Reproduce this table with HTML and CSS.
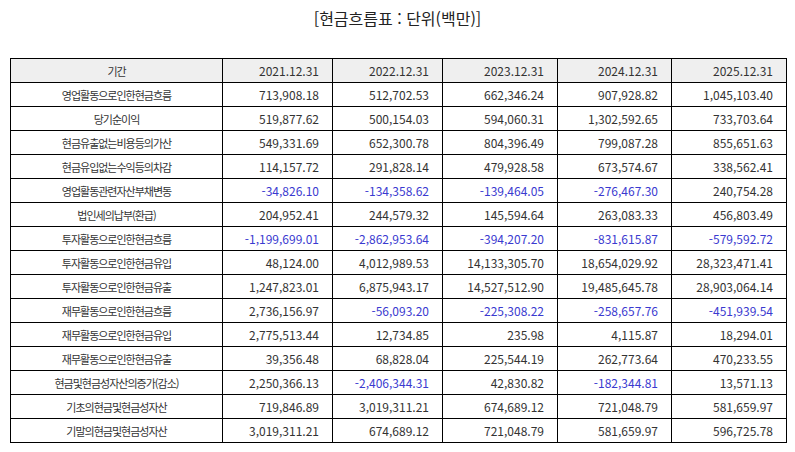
FILE: index.html
```html
<!DOCTYPE html>
<html lang="ko">
<head>
<meta charset="utf-8">
<title>현금흐름표</title>
<link rel="stylesheet" href="styles.css">
</head>
<body>
<h1 class="title">[현금흐름표 : 단위(백만)]</h1>
<table class="cf">
<colgroup>
<col class="c-label"><col class="c-y1"><col class="c-y2"><col class="c-y3"><col class="c-y4"><col class="c-y5">
</colgroup>
<thead>
<tr><th class="lbl">기간</th><th>2021.12.31</th><th>2022.12.31</th><th>2023.12.31</th><th>2024.12.31</th><th>2025.12.31</th></tr>
</thead>
<tbody>
<tr><td class="lbl">영업활동으로인한현금흐름</td><td>713,908.18</td><td>512,702.53</td><td>662,346.24</td><td>907,928.82</td><td>1,045,103.40</td></tr>
<tr><td class="lbl">당기순이익</td><td>519,877.62</td><td>500,154.03</td><td>594,060.31</td><td>1,302,592.65</td><td>733,703.64</td></tr>
<tr><td class="lbl">현금유출없는비용등의가산</td><td>549,331.69</td><td>652,300.78</td><td>804,396.49</td><td>799,087.28</td><td>855,651.63</td></tr>
<tr><td class="lbl">현금유입없는수익등의차감</td><td>114,157.72</td><td>291,828.14</td><td>479,928.58</td><td>673,574.67</td><td>338,562.41</td></tr>
<tr><td class="lbl">영업활동관련자산부채변동</td><td class="neg">-34,826.10</td><td class="neg">-134,358.62</td><td class="neg">-139,464.05</td><td class="neg">-276,467.30</td><td>240,754.28</td></tr>
<tr><td class="lbl">법인세의납부(환급)</td><td>204,952.41</td><td>244,579.32</td><td>145,594.64</td><td>263,083.33</td><td>456,803.49</td></tr>
<tr><td class="lbl">투자활동으로인한현금흐름</td><td class="neg">-1,199,699.01</td><td class="neg">-2,862,953.64</td><td class="neg">-394,207.20</td><td class="neg">-831,615.87</td><td class="neg">-579,592.72</td></tr>
<tr><td class="lbl">투자활동으로인한현금유입</td><td>48,124.00</td><td>4,012,989.53</td><td>14,133,305.70</td><td>18,654,029.92</td><td>28,323,471.41</td></tr>
<tr><td class="lbl">투자활동으로인한현금유출</td><td>1,247,823.01</td><td>6,875,943.17</td><td>14,527,512.90</td><td>19,485,645.78</td><td>28,903,064.14</td></tr>
<tr><td class="lbl">재무활동으로인한현금흐름</td><td>2,736,156.97</td><td class="neg">-56,093.20</td><td class="neg">-225,308.22</td><td class="neg">-258,657.76</td><td class="neg">-451,939.54</td></tr>
<tr><td class="lbl">재무활동으로인한현금유입</td><td>2,775,513.44</td><td>12,734.85</td><td>235.98</td><td>4,115.87</td><td>18,294.01</td></tr>
<tr><td class="lbl">재무활동으로인한현금유출</td><td>39,356.48</td><td>68,828.04</td><td>225,544.19</td><td>262,773.64</td><td>470,233.55</td></tr>
<tr><td class="lbl">현금및현금성자산의증가(감소)</td><td>2,250,366.13</td><td class="neg">-2,406,344.31</td><td>42,830.82</td><td class="neg">-182,344.81</td><td>13,571.13</td></tr>
<tr><td class="lbl">기초의현금및현금성자산</td><td>719,846.89</td><td>3,019,311.21</td><td>674,689.12</td><td>721,048.79</td><td>581,659.97</td></tr>
<tr><td class="lbl">기말의현금및현금성자산</td><td>3,019,311.21</td><td>674,689.12</td><td>721,048.79</td><td>581,659.97</td><td>596,725.78</td></tr>
</tbody>
</table>
</body>
</html>
```
FILE: styles.css
```css
html, body {
  margin: 0;
  padding: 0;
  background: #ffffff;
}
body {
  font-family: "Noto Sans CJK KR", "Noto Sans", sans-serif;
  color: #333333;
}
.title {
  margin: 0;
  padding-top: 6px;
  height: 58px;
  box-sizing: border-box;
  text-align: center;
  font-size: 16px;
  font-weight: 400;
  line-height: 24px;
  color: #222222;
}
.cf {
  margin-left: 10px;
  width: 776px;
  border-collapse: collapse;
  table-layout: fixed;
  font-size: 12px;
}
.c-label { width: 212px; }
.c-y1 { width: 110px; }
.c-y2 { width: 110px; }
.c-y3 { width: 115px; }
.c-y4 { width: 114px; }
.c-y5 { width: 115px; }
.cf th, .cf td {
  border: 1px solid #000000;
  height: 23px;
  padding: 0 13px 0 8px;
  text-align: right;
  white-space: nowrap;
  font-weight: 400;
  line-height: 14px;
}
.cf th {
  background: #efefef;
}
.cf .lbl {
  text-align: center;
  font-size: 11px;
  letter-spacing: -1px;
  padding: 0 4px;
}
.cf .neg {
  color: #3a3ad0;
}
```
